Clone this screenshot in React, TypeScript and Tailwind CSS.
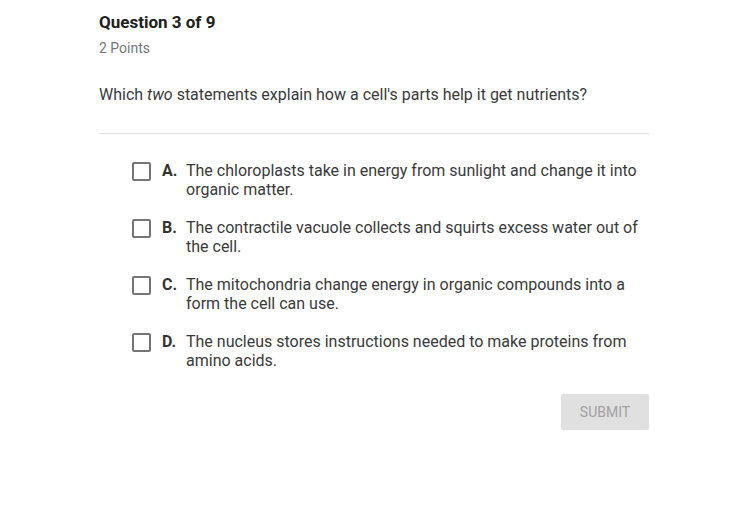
const options = [
  { letter: 'A.', text: 'The chloroplasts take in energy from sunlight and change it into organic matter.' },
  { letter: 'B.', text: 'The contractile vacuole collects and squirts excess water out of the cell.' },
  { letter: 'C.', text: 'The mitochondria change energy in organic compounds into a form the cell can use.' },
  { letter: 'D.', text: 'The nucleus stores instructions needed to make proteins from amino acids.' },
];

export default function App() {
  return (
    <div className="min-h-[512px] w-[740px] bg-white font-['Roboto',sans-serif] text-[#333]">
      <div className="ml-[99px] w-[550px] pt-[10px]">
        <h1 className="text-[17px] font-bold leading-[24px] text-[#212121]">Question 3 of 9</h1>
        <div className="mt-[5px] text-[14px] leading-[18px] text-[#757575]">2 Points</div>
        <p className="mt-[28px] text-[16px] leading-[20px] text-[#3a3a3a]">
          Which <em>two</em> statements explain how a cell's parts help it get nutrients?
        </p>
        <div className="mt-[28px] border-t border-[#e0e0e0]" />
        <div className="mt-[27px] flex flex-col gap-[19px] pl-[33px]">
          {options.map(o => (
            <label key={o.letter} className="flex items-start">
              <span className="mt-[1px] h-[19px] w-[19px] shrink-0 rounded-[2px] border-2 border-[#757575]" />
              <span className="ml-[11px] w-[24px] shrink-0 text-[16px] font-bold leading-[19px] text-[#333]">
                {o.letter}
              </span>
              <span className="w-[455px] text-[16px] leading-[19px] text-[#3a3a3a]">{o.text}</span>
            </label>
          ))}
        </div>
        <div className="mt-[24px] flex justify-end">
          <button className="h-[36px] w-[88px] rounded-[2px] bg-[#e0e0e0] text-[14px] text-[#a0a0a0]">
            SUBMIT
          </button>
        </div>
      </div>
    </div>
  );
}
